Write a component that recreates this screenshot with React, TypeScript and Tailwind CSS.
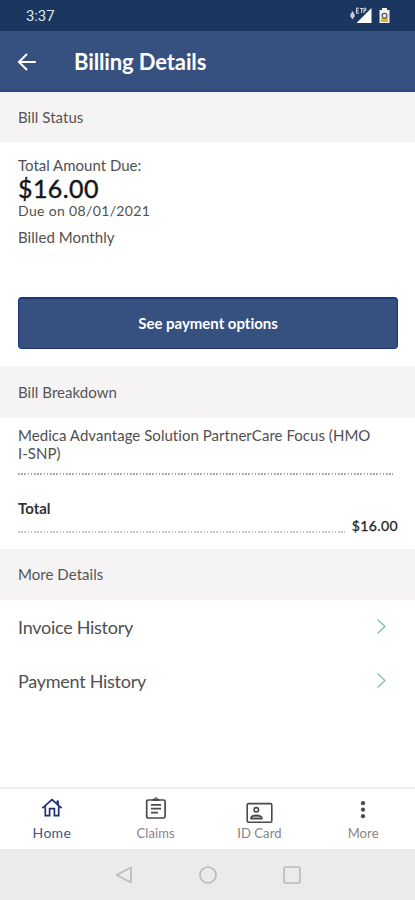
import {ReactNode} from 'react';

type HistoryLink = {
  label: string;
};

type TabItem = {
  label: string;
  icon: ReactNode;
  active?: boolean;
  iconClass: string;
  labelClass: string;
};

const historyLinks: HistoryLink[] = [
  {label: 'Invoice History'},
  {label: 'Payment History'},
];

const HomeIcon = () => (
  <svg width="22" height="22" viewBox="0 0 22 22" fill="none" stroke="#1d2f78" strokeWidth="1.7">
    <path d="M1.4 11.2 11 2.6l9.6 8.6"/>
    <path d="M16.2 7V4.2h1v4" strokeWidth="1.4"/>
    <path d="M4.3 9.2v9.4h4.3v-7h4.8v7h4.3V9.2"/>
  </svg>
);

const ClaimsIcon = () => (
  <svg width="22" height="24" viewBox="0 0 22 24" fill="none" stroke="#4a4a4a" strokeWidth="1.7">
    <rect x="1.7" y="4" width="18.4" height="18" rx="1.6"/>
    <path d="M6 8.8h10M6 12.7h10M6 16.6h7"/>
    <path d="M7.6 3.9h6.6" strokeWidth="2.2"/>
    <circle cx="10.9" cy="3" r="1.3" strokeWidth="1.1"/>
  </svg>
);

const IdCardIcon = () => (
  <svg width="27" height="22" viewBox="0 0 27 22" fill="none" stroke="#4a4a4a" strokeWidth="1.6">
    <rect x="1.2" y="1.6" width="24.6" height="18.6" rx="1.4"/>
    <circle cx="10.3" cy="7.8" r="2.2"/>
    <path d="M5 16.8v-1.2c1.4-3 9.4-3 10.8 0v1.2z" fill="#aaa"/>
  </svg>
);

const MoreIcon = () => (
  <svg width="6" height="20" viewBox="0 0 6 20" fill="#4a4a4a">
    <circle cx="3" cy="3.2" r="2.1"/>
    <circle cx="3" cy="9.7" r="2.1"/>
    <circle cx="3" cy="16.2" r="2.1"/>
  </svg>
);

const tabs: TabItem[] = [
  {label: 'Home', icon: <HomeIcon/>, active: true, iconClass: 'pt-[3px]', labelClass: 'text-[14px] tracking-[0.3px]'},
  {label: 'Claims', icon: <ClaimsIcon/>, iconClass: 'pt-[3px]', labelClass: 'text-[13px] tracking-[0.1px]'},
  {label: 'ID Card', icon: <IdCardIcon/>, iconClass: 'pt-[12px]', labelClass: 'text-[13px] tracking-[0.1px]'},
  {label: 'More', icon: <MoreIcon/>, iconClass: 'pt-[7px]', labelClass: 'text-[13px] tracking-[0.1px]'},
];

function StatusBar() {
  return (
    <div className="flex h-[31px] items-center justify-between bg-[#1b365f] pr-[25px] pl-[26px]">
      <span className="pt-[2px] font-['Roboto',sans-serif] text-[15px] tracking-[-0.1px] text-[#dfe5ee]">3:37</span>
      <div className="flex items-center gap-[7px]">
        <svg width="22" height="17" viewBox="0 0 22 17" fill="#fff">
          <path d="M21.5 1v15H6.5z"/>
          <path d="M.4 7.4 2.5 4l2.1 3.4v1.8l-2.1 3.2L.4 9.2z" fill="#c5cedb"/>
          <path d="M6 1.2h3M6 3.7h2.5M6 6h3M6.6 1v5M10.2 1.5h3M11.7 1.5V6M14 6V1.2h1.8v2.4H14" fill="none" stroke="#d5dce7"/>
        </svg>
        <svg width="11" height="17" viewBox="0 0 11 17">
          <path d="M3 1h5v2h2.5v13H.5V3H3z" fill="#f1f2f0"/>
          <path d="M2 11h7v4H2z" fill="#e2b23a"/>
          <circle cx="5.5" cy="8.7" r="2.4" fill="none" stroke="#4b5b68" strokeWidth="1.3"/>
        </svg>
      </div>
    </div>
  );
}

function SectionTitle({children}: { children: ReactNode }) {
  return (
    <h2 className="flex h-full items-center bg-[#f5f3f4] pl-[18px] text-[15px] tracking-[0.05px] text-[#555]">
      {children}
    </h2>
  );
}

function App() {
  return (
    <div className="flex h-[900px] w-full flex-col bg-white font-['Lato',sans-serif] text-[#505050]">
      <StatusBar/>
      <header className="flex h-[61px] items-center border-b-2 border-[#2b4880] bg-[#365180] pt-[2px] pl-[17px]">
        <svg width="20" height="20" viewBox="0 0 20 20" fill="none" stroke="#fff" strokeWidth="2">
          <path d="M18.8 10H2.4M10 2 2 10l8 8"/>
        </svg>
        <h1 className="ml-[37px] text-[22px] leading-[28px] font-bold tracking-[-0.12px] text-white">Billing Details</h1>
      </header>

      <main className="flex flex-1 flex-col">
        <div className="h-[50px]">
          <SectionTitle>Bill Status</SectionTitle>
        </div>
        <section className="flex h-[224px] flex-col pt-[14px] pr-[17px] pl-[18px] text-[15px]">
          <p className="leading-[18px]">Total Amount Due:</p>
          <p className="text-[25px] leading-[28px] tracking-[0.4px] text-[#161616] [-webkit-text-stroke:0.4px_#161616]">$16.00</p>
          <p className="text-[14px] leading-[18px] tracking-[0.35px]">Due on 08/01/2021</p>
          <p className="mt-[8px] leading-[18px] tracking-[0.05px]">Billed Monthly</p>
          <button className="mt-[51px] h-[52px] shrink-0 rounded-[4px] border border-t-2 border-[#1a3674] bg-[#365180] text-[15px] font-bold tracking-[-0.02px] text-white">
            See payment options
          </button>
        </section>

        <div className="h-[52px]">
          <SectionTitle>Bill Breakdown</SectionTitle>
        </div>
        <section className="h-[131px] pt-[8px] pr-[17px] pl-[18px] text-[15px]">
          <p className="w-[362px] leading-[18px] tracking-[0.04px]">
            Medica Advantage Solution PartnerCare Focus (HMO I-SNP)
          </p>
          <div className="mt-[11px] h-[2px] w-[375px] bg-[repeating-linear-gradient(90deg,#aaa_0_1.6px,transparent_1.6px_3.2px)]"/>
          <p className="mt-[24px] leading-[18px] font-bold text-[#333]">Total</p>
          <div className="flex items-end pt-[1px]">
            <div className="mb-[1px] h-[2px] w-[327px] bg-[repeating-linear-gradient(90deg,#c4c4c4_0_1.6px,transparent_1.6px_3.2px)]"/>
            <span className="ml-auto text-[14px] leading-[16px] tracking-[0.4px] text-[#222] [-webkit-text-stroke:0.25px_#222]">$16.00</span>
          </div>
        </section>

        <div className="h-[51px]">
          <SectionTitle>More Details</SectionTitle>
        </div>
        <ul>
          {historyLinks.map(({label}) => (
            <li key={label} className="flex h-[54px] items-center justify-between pr-[28px] pl-[18px] text-[18px] tracking-[-0.27px]">
              {label}
              <svg className="mb-[2px]" width="11" height="17" viewBox="0 0 11 17" fill="none" stroke="#79bda9" strokeWidth="1.2">
                <path d="m1.5 1.5 7.5 7-7.5 7"/>
              </svg>
            </li>
          ))}
        </ul>
      </main>

      <nav className="grid h-[62px] grid-cols-4 border-t-2 border-[#ededed] bg-white">
        {tabs.map(({label, icon, active, iconClass, labelClass}) => (
          <div key={label} className="flex flex-col items-center">
            <div className={`flex h-[35px] items-center ${iconClass}`}>{icon}</div>
            <span className={`leading-[18px] ${labelClass} ${active ? 'text-[#405584]' : 'text-[#858585]'}`}>{label}</span>
          </div>
        ))}
      </nav>
      <div className="flex h-[51px] items-center justify-center gap-[66px] bg-[#ebebeb]">
        <svg width="18" height="18" viewBox="0 0 18 18" fill="none" stroke="#bcbcbc" strokeWidth="1.7" strokeLinejoin="round">
          <path d="M16 1.4v15.2L1.5 9z"/>
        </svg>
        <svg width="18" height="18" viewBox="0 0 18 18" fill="none" stroke="#bcbcbc" strokeWidth="1.7">
          <circle cx="9" cy="9" r="8"/>
        </svg>
        <svg width="18" height="18" viewBox="0 0 18 18" fill="none" stroke="#bcbcbc" strokeWidth="1.7">
          <rect x="1" y="1" width="16" height="16" rx="2"/>
        </svg>
      </div>
    </div>
  );
}

export default App;
